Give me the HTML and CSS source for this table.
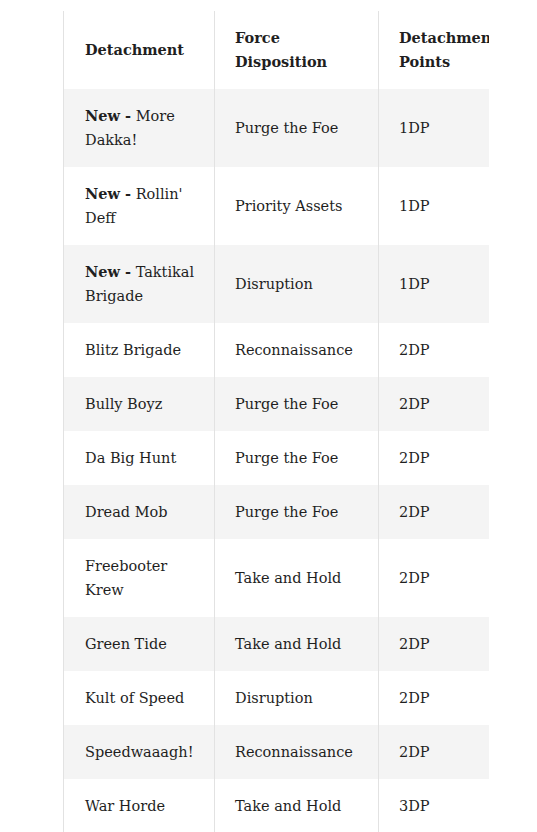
FILE: index.html
```html
<!DOCTYPE html>
<html>
<head>
<meta charset="utf-8">
<link rel="stylesheet" href="styles.css">
</head>
<body>
<div class="page">
  <div class="scroller">
    <table class="detach">
      <colgroup>
        <col class="c1"><col class="c2"><col class="c3">
      </colgroup>
      <thead>
        <tr><th>Detachment</th><th>Force Disposition</th><th>Detachment Points</th></tr>
      </thead>
      <tbody>
        <tr><td><b>New -</b> More Dakka!</td><td>Purge the Foe</td><td>1DP</td></tr>
        <tr><td><b>New -</b> Rollin' Deff</td><td>Priority Assets</td><td>1DP</td></tr>
        <tr><td><b>New -</b> Taktikal Brigade</td><td>Disruption</td><td>1DP</td></tr>
        <tr><td>Blitz Brigade</td><td>Reconnaissance</td><td>2DP</td></tr>
        <tr><td>Bully Boyz</td><td>Purge the Foe</td><td>2DP</td></tr>
        <tr><td>Da Big Hunt</td><td>Purge the Foe</td><td>2DP</td></tr>
        <tr><td>Dread Mob</td><td>Purge the Foe</td><td>2DP</td></tr>
        <tr><td>Freebooter Krew</td><td>Take and Hold</td><td>2DP</td></tr>
        <tr><td>Green Tide</td><td>Take and Hold</td><td>2DP</td></tr>
        <tr><td>Kult of Speed</td><td>Disruption</td><td>2DP</td></tr>
        <tr><td>Speedwaaagh!</td><td>Reconnaissance</td><td>2DP</td></tr>
        <tr><td>War Horde</td><td>Take and Hold</td><td>3DP</td></tr>
      </tbody>
    </table>
  </div>
</div>
</body>
</html>
```
FILE: styles.css
```css
html, body {
  margin: 0;
  padding: 0;
  background: #fff;
}
.page {
  padding: 11px 0 0 63px;
}
.scroller {
  width: 426px;
  overflow: hidden;
}
.detach {
  border-collapse: collapse;
  table-layout: fixed;
  width: 460px;
  font-family: "DejaVu Serif", serif;
  font-size: 14.5px;
  line-height: 24px;
  color: #1f1f1f;
  border-left: 1px solid #e2e2e2;
}
.c1 { width: 151px; }
.c2 { width: 164px; }
.c3 { width: 145px; }
.detach th, .detach td {
  text-align: left;
  vertical-align: middle;
  padding: 15px 20px 15px 20px;
  border-right: 1px solid #e2e2e2;
}
.detach th:first-child, .detach td:first-child {
  padding-left: 21px;
  padding-right: 8px;
}
.detach th {
  font-weight: bold;
}
.detach td b {
  font-weight: bold;
}
.detach tbody tr:nth-child(odd) { background: #f4f4f4; }
```
